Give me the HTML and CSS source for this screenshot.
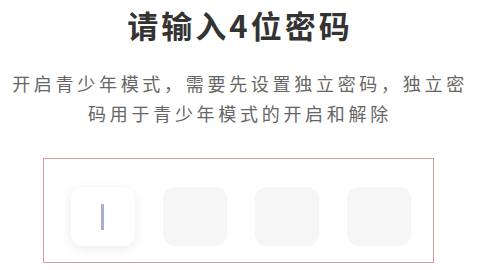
FILE: index.html
```html
<!DOCTYPE html>
<html>
<head>
  <meta charset="utf-8">
  <link rel="stylesheet" href="styles.css">
</head>
<body>
  <div class="page">
    <h1 class="title">请输入4位密码</h1>
    <p class="desc">开启青少年模式，需要先设置独立密码，独立密<br>码用于青少年模式的开启和解除</p>
    <div class="code-frame">
      <div class="code-box active"><span class="cursor"></span></div>
      <div class="code-box"></div>
      <div class="code-box"></div>
      <div class="code-box"></div>
    </div>
  </div>
</body>
</html>
```

FILE: styles.css
```css
body {
  margin: 0;
  padding: 0;
  background: #fff;
  font-family: "Noto Sans CJK SC", "Noto Sans", sans-serif;
}

.page {
  display: flex;
  flex-direction: column;
  align-items: center;
  width: 480px;
  height: 270px;
  overflow: hidden;
}

.title {
  margin: 6px 0 0;
  font-size: 31px;
  line-height: 38px;
  font-weight: bold;
  letter-spacing: 3px;
  color: #333;
}

.desc {
  margin: 24px 0 0;
  font-size: 18px;
  line-height: 30px;
  letter-spacing: 3.7px;
  color: #666;
  text-align: center;
}

.code-frame {
  display: flex;
  gap: 28px;
  margin-top: 30px;
  margin-right: 4px;
  padding: 28px 22px 16px 27px;
  border: 1.5px solid #d99c9c;
}

.code-box {
  width: 64px;
  height: 59px;
  border-radius: 12px;
  background: #f6f6f6;
  display: flex;
  align-items: center;
  justify-content: center;
}

.code-box.active {
  background: #fff;
  box-shadow: 0 3px 12px rgba(0, 0, 0, 0.08);
}

.cursor {
  width: 3px;
  height: 26px;
  background: #a9add2;
}
```
